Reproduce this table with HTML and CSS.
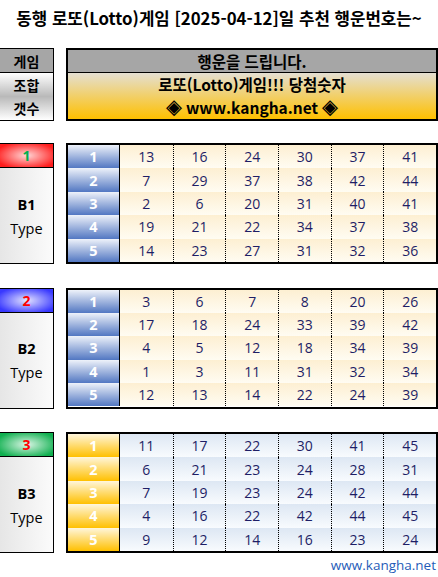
FILE: index.html
```html
<!DOCTYPE html>
<html lang="ko">
<head>
<meta charset="utf-8">
<title>로또 추천 번호</title>
<link rel="stylesheet" href="styles.css">
</head>
<body>
<h1 class="title">동행 로또(Lotto)게임 [2025-04-12]일 추천 행운번호는~</h1>

<div class="top">
  <div class="label-box">
    <div class="label-head">게임</div>
    <div class="label-cyl">조합<br>갯수</div>
  </div>
  <div class="banner">
    <div class="banner-head">행운을 드립니다.</div>
    <div class="banner-body">
      <div>로또(Lotto)게임!!! 당첨숫자</div>
      <div>◈ www.kangha.net ◈</div>
    </div>
  </div>
</div>

<div class="section">
  <div class="side">
    <div class="side-head red">1</div>
    <div class="side-body"><b>B1</b><span>Type</span></div>
  </div>
  <div class="board cream">
    <div class="idx">1</div><div class="v first">13</div><div class="v">16</div><div class="v">24</div><div class="v">30</div><div class="v">37</div><div class="v">41</div>
    <div class="idx">2</div><div class="v first">7</div><div class="v">29</div><div class="v">37</div><div class="v">38</div><div class="v">42</div><div class="v">44</div>
    <div class="idx">3</div><div class="v first">2</div><div class="v">6</div><div class="v">20</div><div class="v">31</div><div class="v">40</div><div class="v">41</div>
    <div class="idx">4</div><div class="v first">19</div><div class="v">21</div><div class="v">22</div><div class="v">34</div><div class="v">37</div><div class="v">38</div>
    <div class="idx">5</div><div class="v first">14</div><div class="v">23</div><div class="v">27</div><div class="v">31</div><div class="v">32</div><div class="v">36</div>
  </div>
</div>

<div class="section">
  <div class="side">
    <div class="side-head blue">2</div>
    <div class="side-body"><b>B2</b><span>Type</span></div>
  </div>
  <div class="board cream">
    <div class="idx">1</div><div class="v first">3</div><div class="v">6</div><div class="v">7</div><div class="v">8</div><div class="v">20</div><div class="v">26</div>
    <div class="idx">2</div><div class="v first">17</div><div class="v">18</div><div class="v">24</div><div class="v">33</div><div class="v">39</div><div class="v">42</div>
    <div class="idx">3</div><div class="v first">4</div><div class="v">5</div><div class="v">12</div><div class="v">18</div><div class="v">34</div><div class="v">39</div>
    <div class="idx">4</div><div class="v first">1</div><div class="v">3</div><div class="v">11</div><div class="v">31</div><div class="v">32</div><div class="v">34</div>
    <div class="idx">5</div><div class="v first">12</div><div class="v">13</div><div class="v">14</div><div class="v">22</div><div class="v">24</div><div class="v">39</div>
  </div>
</div>

<div class="section">
  <div class="side">
    <div class="side-head green">3</div>
    <div class="side-body"><b>B3</b><span>Type</span></div>
  </div>
  <div class="board ice">
    <div class="idx">1</div><div class="v first">11</div><div class="v">17</div><div class="v">22</div><div class="v">30</div><div class="v">41</div><div class="v">45</div>
    <div class="idx">2</div><div class="v first">6</div><div class="v">21</div><div class="v">23</div><div class="v">24</div><div class="v">28</div><div class="v">31</div>
    <div class="idx">3</div><div class="v first">7</div><div class="v">19</div><div class="v">23</div><div class="v">24</div><div class="v">42</div><div class="v">44</div>
    <div class="idx">4</div><div class="v first">4</div><div class="v">16</div><div class="v">22</div><div class="v">42</div><div class="v">44</div><div class="v">45</div>
    <div class="idx">5</div><div class="v first">9</div><div class="v">12</div><div class="v">14</div><div class="v">16</div><div class="v">23</div><div class="v">24</div>
  </div>
</div>

<div class="footer">www.kangha.net</div>
</body>
</html>
```

FILE: styles.css
```css
* { box-sizing: border-box; }
html, body { margin: 0; padding: 0; background: #fff; }
body {
  width: 438px;
  font-family: "Open Sans", "Noto Sans CJK KR", sans-serif;
  color: #000;
}
.title {
  margin: 0 0 12px 0;
  height: 36px;
  line-height: 36px;
  font-size: 16.8px;
  font-weight: bold;
  text-align: center;
  font-family: "Noto Sans CJK KR", sans-serif;
  white-space: nowrap;
}
.top {
  display: flex;
  gap: 12px;
  height: 73px;
}
.label-box {
  width: 54px;
  border: 1px solid #000;
  border-left: 0;
  display: flex;
  flex-direction: column;
  font-family: "Noto Sans CJK KR", sans-serif;
  font-size: 14px;
}
.label-head {
  height: 24px;
  background: #a6a6a6;
  border-bottom: 1px solid #000;
  display: flex;
  align-items: center;
  justify-content: center;
  font-weight: bold;
}
.label-cyl {
  flex: 1;
  background: linear-gradient(#ffffff, #b9b9b9 50%, #ffffff);
  display: flex;
  align-items: center;
  justify-content: center;
  text-align: center;
  line-height: 23px;
  font-weight: bold;
}
.banner {
  flex: 1;
  border: 2px solid #000;
  display: flex;
  flex-direction: column;
  font-family: "Noto Sans CJK KR", sans-serif;
  font-weight: bold;
  font-size: 15.5px;
}
.banner-head {
  height: 23px;
  background: #a6a6a6;
  border-bottom: 1px solid #000;
  display: flex;
  align-items: center;
  justify-content: center;
}
.banner-body {
  flex: 1;
  background: linear-gradient(#e4dfd2, #ffc000);
  display: flex;
  flex-direction: column;
  justify-content: center;
  align-items: center;
  line-height: 23px;
}
.section {
  display: flex;
  gap: 12px;
  height: 121px;
  margin-top: 22px;
}
.section + .section { margin-top: 23.5px; }
.side {
  width: 54px;
  border: 1px solid #000;
  border-left: 0;
  display: flex;
  flex-direction: column;
}
.side-head {
  height: 24px;
  border-bottom: 1px solid #000;
  display: flex;
  align-items: center;
  justify-content: center;
  font-weight: bold;
  font-size: 14px;
  color: #ff0000;
}
.side-head.red {
  color: #00b050;
  background: radial-gradient(ellipse 60% 60% at 50% 50%, #ffd8d8 0%, #ff1e1e 100%);
}
.side-head.blue {
  background: radial-gradient(ellipse 60% 60% at 50% 50%, #e4e4ff 0%, #3838ff 100%);
}
.side-head.green {
  background: radial-gradient(ellipse 60% 60% at 50% 50%, #dcf6e6 0%, #10b050 100%);
}
.side-body {
  flex: 1;
  background: linear-gradient(to right, #e6e6e6, #fbfbfb);
  display: flex;
  flex-direction: column;
  align-items: center;
  justify-content: center;
  font-size: 14.5px;
  line-height: 24px;
  padding-top: 2px;
}
.side-body b { font-weight: bold; }
.board {
  width: 372px;
  border: 2px solid #000;
  display: grid;
  grid-template-columns: 52px repeat(6, 1fr);
  grid-template-rows: repeat(5, 1fr);
}
.idx {
  border-right: 1px solid #000;
  display: flex;
  align-items: center;
  justify-content: center;
  color: #fff;
  font-weight: bold;
  font-size: 14.5px;
}
.cream .idx { background: linear-gradient(#eef2fa, #5277c2); }
.ice .idx { background: linear-gradient(#fff6dc, #ffc000); }
.v {
  display: flex;
  align-items: center;
  justify-content: center;
  font-size: 14px;
  color: #1e1e66;
  border-left: 1px dotted #000;
}
.v.first { border-left: 0; }
.cream .v { background: linear-gradient(#fdefd2, #fffcf2); }
.ice .v { background: linear-gradient(#dde7f3, #f8fbfe); }
.footer {
  text-align: right;
  padding-right: 2px;
  margin-top: 3px;
  font-size: 13.5px;
  color: #1f5cb8;
  font-family: "Open Sans", sans-serif;
}
```
